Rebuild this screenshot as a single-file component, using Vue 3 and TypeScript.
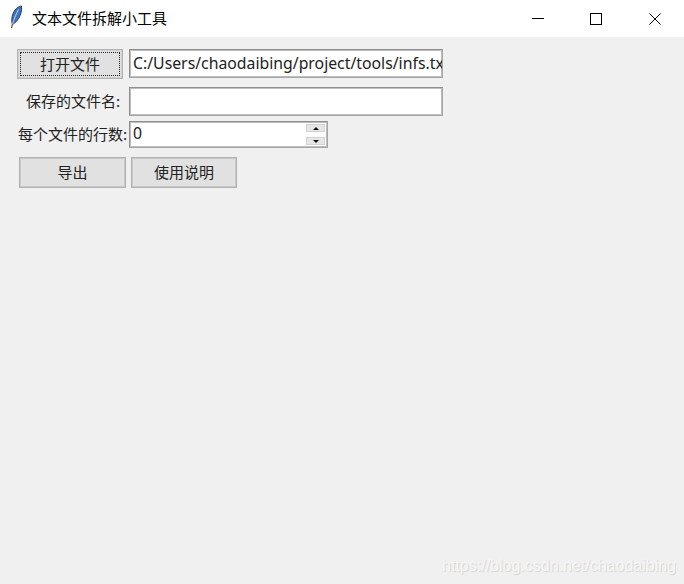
<script setup lang="ts">
import { ref } from 'vue'

const filePath = ref('C:/Users/chaodaibing/project/tools/infs.txt')
const saveName = ref('')
const lineCount = ref('0')
</script>

<template>
  <div class="window">
    <header class="titlebar">
      <svg class="feather" width="16" height="26" viewBox="0 0 16 26" aria-hidden="true">
        <path d="M3.5 20.5C1.5 16 3.5 8 7.5 4.5C9.5 2.8 11.5 2 12.5 2C13 6 12 11 9.5 14.5C8 17 6 19 3.5 20.5Z" fill="#3f74c4" stroke="#2b3f5f" stroke-width="1" />
        <path d="M9.5 5.5C7.5 9 5.5 14 3.5 20" fill="none" stroke="#b9d2ef" stroke-width="1" />
        <path d="M3.5 20L2.5 24" fill="none" stroke="#555" stroke-width="1.2" />
      </svg>
      <span class="title">文本文件拆解小工具</span>
      <div class="controls">
        <span class="control">
          <svg width="12" height="12" viewBox="0 0 12 12" aria-hidden="true"><path d="M0 5.5H12" stroke="#000" stroke-width="1" /></svg>
        </span>
        <span class="control">
          <svg width="12" height="12" viewBox="0 0 12 12" aria-hidden="true"><rect x="0.5" y="0.5" width="11" height="11" fill="none" stroke="#000" stroke-width="1" /></svg>
        </span>
        <span class="control close">
          <svg width="12" height="12" viewBox="0 0 12 12" aria-hidden="true"><path d="M0.5 0.5L11.5 11.5M11.5 0.5L0.5 11.5" stroke="#000" stroke-width="1" /></svg>
        </span>
      </div>
    </header>

    <main class="body">
      <div class="row first">
        <button class="btn open" type="button"><span class="focus">打开文件</span></button>
        <input v-model="filePath" class="entry" type="text" />
      </div>
      <div class="row second">
        <label class="label save">保存的文件名:</label>
        <input v-model="saveName" class="entry" type="text" />
      </div>
      <div class="row third">
        <label class="label count">每个文件的行数:</label>
        <div class="spin">
          <input v-model="lineCount" class="spin-input" type="text" />
          <div class="spin-buttons">
            <span class="spin-btn"><i class="arrow up"></i></span>
            <span class="spin-btn"><i class="arrow down"></i></span>
          </div>
        </div>
      </div>
      <div class="row actions">
        <button class="btn action" type="button">导出</button>
        <button class="btn action help" type="button">使用说明</button>
      </div>
      <span class="watermark">https://blog.csdn.net/chaodaibing</span>
    </main>
  </div>
</template>

<style>
html, body { margin: 0; background: #f0f0f0; }
</style>

<style scoped>
.window {
  width: 684px;
  height: 584px;
  display: flex;
  flex-direction: column;
  overflow: hidden;
  font-family: "Noto Sans CJK SC", "Noto Sans", sans-serif;
  font-size: 15px;
  color: #222;
  background: #f0f0f0;
}
.titlebar {
  height: 37px;
  flex: none;
  display: flex;
  align-items: center;
  background: #fff;
  padding-left: 9px;
}
.feather { flex: none; margin-top: -3px; }
.title { margin-left: 7px; line-height: 20px; color: #000; padding-bottom: 2px; }
.controls { margin-left: auto; display: flex; }
.control {
  width: 58px;
  height: 37px;
  display: flex;
  align-items: center;
  justify-content: center;
}
.close { width: 59px; padding-left: 1px; box-sizing: border-box; }
.body {
  position: relative;
  flex: 1;
  padding: 12px 0 0 17px;
}
.row { display: flex; align-items: stretch; }
.second { margin-top: 8px; }
.third { margin-top: 5px; }
.actions { margin-top: 9px; padding-left: 2px; gap: 5px; }
.btn {
  padding: 0 0 2px;
  margin: 0;
  font: inherit;
  color: #222;
  background: #e1e1e1;
  border: 1px solid #b2b2b2;
  box-shadow: inset 0 0 0 1px #c8c8c8;
  box-sizing: border-box;
}
.open { width: 106px; height: 30px; padding: 2px; margin-right: 6px; box-shadow: inset 0 0 0 1px #d0d0d0; }
.focus {
  display: flex;
  align-items: center;
  justify-content: center;
  height: 100%;
  box-sizing: border-box;
  padding-bottom: 2px;
  border: 1px dotted #222;
}
.action { width: 107px; height: 31px; }
.help { width: 106px; }
.entry {
  width: 314px;
  height: 29px;
  box-sizing: border-box;
  border: 1px solid #8f8f8f;
  border-right-color: #a6a6a6;
  border-bottom-color: #a6a6a6;
  box-shadow: inset 0 0 0 1px #bdbdbd;
  padding: 0 0 1px 3px;
  margin: 0;
  outline: none;
  background: #fff;
  color: #222;
  font-family: "Noto Sans", sans-serif;
  font-size: 15.8px;
}
.label { display: flex; align-items: center; white-space: nowrap; padding-bottom: 2px; }
.save { width: 112px; padding-left: 9px; box-sizing: border-box; }
.count { width: 112px; padding-left: 1px; box-sizing: border-box; }
.spin {
  width: 199px;
  height: 27px;
  box-sizing: border-box;
  border: 1px solid #8f8f8f;
  border-right-color: #a6a6a6;
  border-bottom-color: #a6a6a6;
  box-shadow: inset 0 0 0 1px #bdbdbd;
  background: #fff;
  display: flex;
}
.spin-input {
  flex: 1;
  min-width: 0;
  border: 0;
  outline: none;
  padding: 0 0 4px 3px;
  margin: 0;
  background: transparent;
  color: #222;
  font-family: "Noto Sans", sans-serif;
  font-size: 15.8px;
}
.spin-buttons {
  width: 19px;
  margin-right: 2px;
  padding: 2px 0;
  display: flex;
  flex-direction: column;
  justify-content: space-between;
}
.spin-btn {
  height: 8px;
  background: #e6e6e6;
  border: 1px solid #d4d4d4;
  box-sizing: border-box;
  display: flex;
  align-items: center;
  justify-content: center;
}
.arrow { width: 0; height: 0; border-left: 3.5px solid transparent; border-right: 3.5px solid transparent; }
.up { border-bottom: 3.5px solid #111; }
.down { border-top: 3.5px solid #111; }
.watermark {
  position: absolute;
  right: 8px;
  bottom: 7px;
  font-family: "Liberation Sans", sans-serif;
  font-size: 16px;
  line-height: 22px;
  color: #f6f6f6;
  text-shadow: 1px 1px 1px #d4d4d4;
  white-space: nowrap;
}
</style>
